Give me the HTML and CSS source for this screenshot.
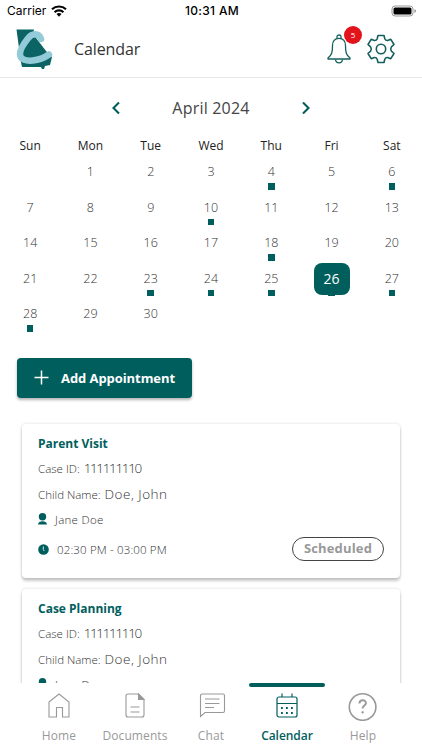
FILE: index.html
```html
<!DOCTYPE html>
<html lang="en">
<head>
    <meta charset="utf-8">
    <meta name="viewport" content="width=device-width, initial-scale=1">
    <title>Calendar</title>
    <link rel="stylesheet" href="styles.css">
</head>
<body>
<div class="status-bar">
    <div class="carrier">
        <span>Carrier</span>
        <svg width="16" height="12" viewBox="0 0 16 12" fill="none" stroke="#000" stroke-width="2.2">
            <path d="M1 4.3a10.2 10.2 0 0 1 14 0"/>
            <path d="M3.6 7.2a6.4 6.4 0 0 1 8.8 0"/>
            <path d="M5.5 9.1a3.7 3.7 0 0 1 5 0L8 11.7z" fill="#000" stroke="none"/>
        </svg>
    </div>
    <span class="clock">10:31 AM</span>
    <svg class="battery" width="26" height="12" viewBox="0 0 26 12">
        <rect x="1" y="1" width="21" height="10" rx="3" fill="none" stroke="#999"/>
        <rect x="2.5" y="2.5" width="18" height="7" rx="1.5"/>
        <path d="M23.5 4v4q1.5-.8 1.5-2t-1.5-2z" fill="#888"/>
    </svg>
</div>
<header class="header">
    <svg class="logo" width="40" height="42" viewBox="0 0 40 42">
        <path d="M1.500 1.500H19L18 6l13 17 6 6-2 8-5 1-1 3h-2l-1-2H7L5 30 4 20z" fill="#0b6463"/>
        <path d="M26 11C24 4.500 17 4.500 12.500 11 7 18 3 25 6 29.500c4 5 18 4 28-3" fill="none" stroke="#93cbd8" stroke-width="6.500" stroke-linecap="round"/>
    </svg>
    <h1>Calendar</h1>
    <div class="header-icons">
        <div class="bell">
            <svg width="24" height="30" viewBox="0 0 24 30" fill="none" stroke="#14605d" stroke-width="1.300" stroke-linejoin="round">
                <path d="M10 4.500V2.500a2 1.500 0 0 1 4 0v2"/>
                <path d="M12 4.300C7.500 4.300 5.500 7.500 5.500 11.500c0 7-.7 9.500-4.500 12.500v1h22v-1c-3.800-3-4.500-5.500-4.500-12.500 0-4-2-7.200-6.500-7.200z"/>
                <path d="M8.500 25.500c.5 4.500 6.500 4.500 7 0"/>
            </svg>
            <span class="badge">5</span>
        </div>
        <svg class="gear" width="30" height="30" viewBox="0 0 30 30" fill="none" stroke="#14605d" stroke-width="1.600" stroke-linejoin="round">
            <path d="M12 1.500h6l.8 3.200q.8 2 2.800 1.800l3.200-1.200 3.200 5.200-2.600 2.400q-1.400 2.100 0 4.200l2.600 2.400-3.200 5.200-3.200-1.200q-2-.2-2.800 1.800l-.8 3.200h-6l-.8-3.200q-.8-2-2.800-1.800l-3.200 1.200L2 19.500l2.600-2.400q1.400-2.100 0-4.200L2 10.500l3.200-5.200 3.200 1.200q2 .2 2.800-1.800z"/>
            <circle cx="15" cy="15" r="4.700"/>
        </svg>
    </div>
</header>
<main class="content">
    <div class="month">
        <svg width="10" height="14" viewBox="0 0 10 14" fill="none" stroke="#005e5d" stroke-width="2.100"><path d="M8 1.500L2.500 7 8 12.500"/></svg>
        <span class="month-name">April 2024</span>
        <svg width="10" height="14" viewBox="0 0 10 14" fill="none" stroke="#005e5d" stroke-width="2.100"><path d="M2 1.500L7.500 7 2 12.500"/></svg>
    </div>
    <div class="weekdays">
        <span>Sun</span><span>Mon</span><span>Tue</span><span>Wed</span><span>Thu</span><span>Fri</span><span>Sat</span>
    </div>
    <div class="days">
        <div class="day"></div>
        <div class="day">1</div>
        <div class="day">2</div>
        <div class="day">3</div>
        <div class="day event">4</div>
        <div class="day">5</div>
        <div class="day event">6</div>
        <div class="day">7</div>
        <div class="day">8</div>
        <div class="day">9</div>
        <div class="day event">10</div>
        <div class="day">11</div>
        <div class="day">12</div>
        <div class="day">13</div>
        <div class="day">14</div>
        <div class="day">15</div>
        <div class="day">16</div>
        <div class="day">17</div>
        <div class="day event">18</div>
        <div class="day">19</div>
        <div class="day">20</div>
        <div class="day">21</div>
        <div class="day">22</div>
        <div class="day event">23</div>
        <div class="day event">24</div>
        <div class="day event">25</div>
        <div class="day event"><span class="selected">26</span></div>
        <div class="day event">27</div>
        <div class="day event">28</div>
        <div class="day">29</div>
        <div class="day">30</div>
    </div>
    <button class="add-btn">
        <svg width="15" height="15" viewBox="0 0 15 15" stroke="#fff" stroke-width="1.500"><path d="M7.500 .5v14M.5 7.500h14"/></svg>
        <span>Add Appointment</span>
    </button>
    <div class="cards">
        <div class="card">
            <h2>Parent Visit</h2>
            <div class="line"><span class="label">Case ID:</span><span class="case-id">111111110</span></div>
            <div class="line"><span class="label">Child Name:</span><span class="child-name">Doe, John</span></div>
            <div class="person">
                <svg width="9" height="12" viewBox="0 0 9 12" fill="#005e5d"><circle cx="4.500" cy="3.700" r="3.700"/><path d="M0 11.500c0-4.500 9-4.500 9 0z"/></svg>
                <span>Jane Doe</span>
            </div>
            <div class="time-row">
                <svg width="11" height="11" viewBox="0 0 11 11"><circle cx="5.500" cy="5.500" r="5.300" fill="#005e5d"/><path d="M5.300 2.500v3l1 1.500" fill="none" stroke="#d5e9e8"/></svg>
                <span class="time">02:30 PM - 03:00 PM</span>
                <span class="status">Scheduled</span>
            </div>
        </div>
        <div class="card">
            <h2>Case Planning</h2>
            <div class="line"><span class="label">Case ID:</span><span class="case-id">111111110</span></div>
            <div class="line"><span class="label">Child Name:</span><span class="child-name">Doe, John</span></div>
            <div class="person">
                <svg width="9" height="12" viewBox="0 0 9 12" fill="#005e5d"><circle cx="4.500" cy="3.700" r="3.700"/><path d="M0 11.500c0-4.500 9-4.500 9 0z"/></svg>
                <span>Jane Doe</span>
            </div>
        </div>
    </div>
</main>
<nav class="tabs">
    <div class="tab">
        <svg width="30" height="30" viewBox="0 0 30 30" fill="none" stroke="#999" stroke-width="1.100"><path d="M5 11L15 3l10 8v15h-6.500v-9.500h-6V26H5z"/></svg>
        <span>Home</span>
    </div>
    <div class="tab">
        <svg width="30" height="30" viewBox="0 0 30 30" fill="none" stroke="#999" stroke-width="1.100"><path d="M8 3h10.500L24 8.500V24a2 2 0 0 1-2 2H8a2 2 0 0 1-2-2V5a2 2 0 0 1 2-2zM10.500 16h9M10.500 21h9"/><path d="M18.500 3v5.500H24z" fill="#999"/></svg>
        <span>Documents</span>
    </div>
    <div class="tab">
        <svg width="30" height="30" viewBox="0 0 30 30" fill="none" stroke="#999" stroke-width="1.100"><path d="M6 3h21a1.500 1.500 0 0 1 1.500 1.500V20a1.500 1.500 0 0 1-1.500 1.500H9L4.500 25.500v-21A1.500 1.500 0 0 1 6 3zM9 8h14.500M9 12.500h14.500M9 16.500h9"/></svg>
        <span>Chat</span>
    </div>
    <div class="tab active">
        <svg width="30" height="30" viewBox="0 0 30 30" fill="none" stroke="#005e5d" stroke-width="1.200"><path d="M7 6h16a2 2 0 0 1 2 2v16a2 2 0 0 1-2 2H7a2 2 0 0 1-2-2V8a2 2 0 0 1 2-2zM5 12.500h20M10 2.500V6M20 2.500V6"/><path d="M9 17h1.800M14 17h1.800M19 17h1.800M9 22h1.800M14 22h1.800M19 22h1.800" stroke-width="1.800"/></svg>
        <span>Calendar</span>
    </div>
    <div class="tab">
        <svg width="30" height="30" viewBox="0 0 30 30" fill="none" stroke="#999"><circle cx="14.600" cy="16" r="13.300" stroke-width="1.600"/><path d="M11.400 12.500c.3-4.500 7-4 6.500-.2-.3 2.300-3.300 2.300-3.300 5.200" stroke-width="1.900"/><circle cx="14.600" cy="21.300" r=".8" fill="#999"/></svg>
        <span>Help</span>
    </div>
</nav>
</body>
</html>
```

FILE: styles.css
```css
* {
    box-sizing: border-box;
}
body {
    margin: 0;
    width: 422px;
    height: 750px;
    overflow: hidden;
    display: flex;
    flex-direction: column;
    background-color: #fff;
    color: #333;
    font-family: "Open Sans", "Noto Sans", sans-serif;
    font-weight: 300;
}
svg {
    display: block;
    flex: none;
}
.status-bar {
    display: grid;
    grid-template-columns: 1fr auto 1fr;
    align-items: center;
    height: 21px;
    flex: none;
    padding: 0 5px 0 7px;
    font-family: Inter, "Liberation Sans", sans-serif;
    font-size: 12px;
    font-weight: 400;
    color: #000;
}
.carrier {
    display: flex;
    align-items: center;
    gap: 5px;
}
.clock {
    font-weight: 500;
    letter-spacing: 0.3px;
}
.battery {
    justify-self: end;
}
.header {
    display: flex;
    align-items: center;
    height: 57px;
    flex: none;
    padding: 0 26px 0 15px;
    border-bottom: 1px solid #e8e8e8;
}
.header h1 {
    margin: 0 0 0 19px;
    font-size: 16px;
    font-weight: 400;
    letter-spacing: -0.1px;
    color: #333;
}
.header-icons {
    display: flex;
    align-items: center;
    gap: 14px;
    margin-left: auto;
}
.bell {
    position: relative;
    left: -1px;
}
.badge {
    position: absolute;
    top: -8px;
    left: 17px;
    width: 18px;
    height: 18px;
    border-radius: 50%;
    background-color: #e3131b;
    color: #fff;
    font-size: 8px;
    font-weight: 400;
    line-height: 18px;
    text-align: center;
}
.content {
    flex: 1;
    min-height: 0;
    overflow: hidden;
}
.month {
    display: flex;
    justify-content: space-between;
    align-items: center;
    width: 200px;
    height: 30px;
    margin: 15px auto 0;
}
.month-name {
    font-size: 16px;
    font-weight: 400;
    letter-spacing: 0.2px;
    color: #444;
}
.weekdays {
    display: grid;
    grid-template-columns: repeat(7, 1fr);
    height: 20px;
    margin-top: 13px;
    font-size: 12px;
    line-height: 20px;
    font-weight: 400;
    text-align: center;
    color: #222;
}
.days {
    display: grid;
    grid-template-columns: repeat(7, 1fr);
    grid-auto-rows: 35.6px;
    margin-top: 6px;
}
.day {
    display: flex;
    flex-direction: column;
    align-items: center;
    font-size: 12.5px;
    line-height: 20px;
}
.event::after {
    content: "";
    width: 6.5px;
    height: 6.5px;
    margin-top: 1px;
    background-color: #005e5d;
}
.selected {
    width: 36px;
    height: 32px;
    margin: -6px 0;
    border-radius: 8px;
    background-color: #005e5d;
    color: #fff;
    font-size: 14px;
    font-weight: 400;
    line-height: 31px;
    text-align: center;
}
.add-btn {
    display: flex;
    align-items: center;
    gap: 12px;
    width: 175px;
    height: 40px;
    margin: 18px 0 0 17px;
    padding: 0 0 0 17px;
    border: none;
    border-radius: 4px;
    background-color: #005e5d;
    color: #fff;
    font-family: inherit;
    font-size: 13px;
    font-weight: 700;
    letter-spacing: -0.07px;
    box-shadow: 0 2px 3px rgba(0, 0, 0, 0.3);
}
.cards {
    display: flex;
    flex-direction: column;
    gap: 11px;
    padding: 26.5px 22px 0;
}
.card {
    height: 154px;
    flex: none;
    padding: 10px 16px;
    border-radius: 4px;
    background-color: #fff;
    box-shadow: 0 3px 3px rgba(0, 0, 0, 0.2), 0 0 3px rgba(0, 0, 0, 0.15);
}
.card h2 {
    margin: 0 0 4px;
    font-size: 12px;
    line-height: 20px;
    font-weight: 700;
    color: #005e5d;
}
.line {
    display: flex;
    align-items: baseline;
    gap: 4px;
    height: 25.5px;
    line-height: 20px;
    font-size: 11.5px;
}
.case-id {
    font-size: 13.5px;
    letter-spacing: -1.35px;
}
.child-name {
    font-size: 13.5px;
    letter-spacing: 0.5px;
}
.person {
    display: flex;
    align-items: center;
    gap: 8px;
    height: 20px;
    font-size: 11.5px;
    letter-spacing: 0.3px;
}
.time-row {
    display: flex;
    align-items: center;
    gap: 8px;
    height: 24px;
    margin-top: 8px;
    font-size: 11.5px;
    letter-spacing: 0.15px;
}
.status {
    width: 92px;
    height: 24px;
    margin-left: auto;
    border: 1px solid #444;
    border-radius: 12px;
    font-size: 13px;
    line-height: 21px;
    font-weight: 700;
    text-align: center;
    color: #999;
}
.tabs {
    display: grid;
    grid-template-columns: repeat(5, 76px);
    justify-content: center;
    height: 67px;
    flex: none;
    background-color: #fff;
    color: #999;
    font-size: 12px;
}
.tab {
    display: flex;
    flex-direction: column;
    align-items: center;
    gap: 5px;
    padding-top: 4px;
    border-top: 4px solid transparent;
    line-height: 20px;
    font-weight: 400;
    letter-spacing: 0.1px;
}
.active {
    position: relative;
    color: #005e5d;
    font-weight: 600;
    letter-spacing: -0.05px;
}
.active::before {
    content: "";
    position: absolute;
    top: -4px;
    left: 0;
    width: 76px;
    height: 4px;
    border-radius: 2px;
    background-color: #005e5d;
}
```
